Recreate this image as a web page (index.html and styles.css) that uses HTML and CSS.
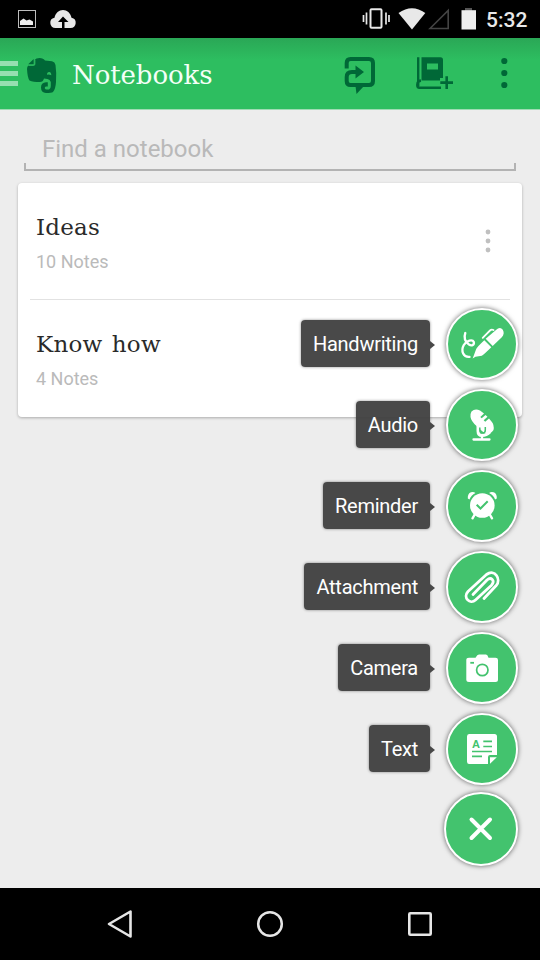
FILE: index.html
```html
<!DOCTYPE html>
<html lang="en">
<head>
<meta charset="utf-8">
<title>Notebooks</title>
<link rel="stylesheet" href="styles.css">
</head>
<body>
<div class="screen">
  <div class="statusbar">
    <svg class="status-left" width="80" height="38" viewBox="0 0 80 38">
      <rect x="18.500" y="10.500" width="17" height="17" fill="none" stroke="#bdbdbd"/>
      <path d="M20 25v-4l3.500-2.500 3 2 3-1 3.500 2v3.500z" fill="#eee"/>
      <path d="M55.500 28a5.200 5.200 0 0 1-1-10.300C55.500 13 59 10 63 10s7.500 3 8.500 7.700A5.200 5.200 0 0 1 70.500 28h-6v-6h4L63 16.500l-5 5.500h4v6z" fill="#e8e8e8"/>
    </svg>
    <svg class="status-right" width="120" height="38" viewBox="360 0 120 38">
      <rect x="370.500" y="9.200" width="11" height="18.600" rx="1" fill="none" stroke="#e8e8e8" stroke-width="2"/>
      <path d="M363.500 15v7M366.500 12.500v12M386 12.500v12M389 15v7" stroke="#e8e8e8" stroke-width="1.700"/>
      <path d="M398.500 13Q412 3.500 425.300 13L412 29.500z" fill="#e8e8e8"/>
      <path d="M430 28.500L448.200 10.500v18z" fill="none" stroke="#444" stroke-width="1.600"/>
      <path d="M465 8h7v3h-7z" fill="#555"/>
      <path d="M461.500 10.200h14.500v19.300h-14.500z" fill="#eee"/>
    </svg>
    <span class="clock">5:32</span>
  </div>

  <header class="appbar">
    <div class="drawer"><i></i><i></i><i></i></div>
    <svg class="logo" width="31" height="37" viewBox="26 57 31 37">
      <path d="M34.800 59.500Q36 58 39.500 58Q43.500 58 45 60.500L52 61.300Q55 62 55.500 65Q56.700 73 56 82Q55.500 89.500 53 92Q51.500 93 46 93Q41 92.500 41 87.500Q41 82.500 46 82.300L47.800 82.300V86.500H45.800Q44.600 87 44.800 88.300Q45.200 89.500 46.500 89.500H49Q50.800 89 50.800 86V82Q50 79.500 47.500 79L44 78.500Q43 82 40 82Q33 82 29.500 80.500Q27.500 78 27 69Q27 66.500 28.300 65.500H33.500Q34.800 65.500 34.800 64z" fill="#006837"/>
      <path d="M28.200 64.300L33.700 59V64.300z" fill="#006837"/>
      <path d="M34.900 59.500V64Q34.900 65.400 33.500 65.400H28.500" fill="none" stroke="#2dbe60" stroke-width="0.900"/>
      <path d="M47 74.700q0-3 2.300-2.800 2 .3 2 3.400-2-1-4.300-.6z" fill="#2dbe60"/>
    </svg>
    <h1 class="title">Notebooks</h1>
    <svg class="act-share" width="32" height="40" viewBox="344 56 32 40">
      <path d="M346.700 68.500V63Q346.700 59 350.500 59H369Q373 59 373 63V81Q373 85 369 85H350.500Q346.700 85 346.700 81V77Q346.700 72 352 72H357" fill="none" stroke="#006837" stroke-width="4"/>
      <path d="M355.500 65.500L364 72L355.500 78.500zM355.500 86H364L356.500 94z" fill="#006837"/>
    </svg>
    <svg class="act-new" width="38" height="36" viewBox="416 56 38 36">
      <path d="M421.500 57.300H440.500Q443 57.300 443 60V78H440V80.500H421.500zM427 63.500V69.500H438V63.500z" fill="#006837" fill-rule="evenodd"/>
      <path d="M418.200 57.300V86M441 87.800H419.500Q417 87.500 417.300 84.500Q417.500 81 421 80.500" fill="none" stroke="#006837" stroke-width="2.400"/>
      <path d="M446.700 76.200V89M440.300 82.600H453" stroke="#006837" stroke-width="2.600"/>
    </svg>
    <svg class="act-more" width="8" height="32" viewBox="0 0 8 32">
      <g fill="#006837"><circle cx="4.300" cy="4" r="3.100"/><circle cx="4.300" cy="16" r="3.100"/><circle cx="4.300" cy="28" r="3.100"/></g>
    </svg>
  </header>

  <main class="content">
    <div class="search"><span>Find a notebook</span></div>
    <section class="card">
      <article class="row">
        <div><h2>Ideas</h2><p>10 Notes</p></div>
        <svg class="row-more" width="6" height="24" viewBox="0 0 6 24">
          <g fill="#c0c0c0"><circle cx="3" cy="3" r="2.400"/><circle cx="3" cy="12" r="2.400"/><circle cx="3" cy="21" r="2.400"/></g>
        </svg>
      </article>
      <article class="row">
        <div><h2>Know how</h2><p>4 Notes</p></div>
      </article>
    </section>
  </main>

  <div class="fab-menu">
    <div class="fab-item">
      <span class="label">Handwriting</span>
      <div class="fab"><svg width="68" height="68" viewBox="448 310 68 68">
        <path d="M465.300 333C463.500 338 465.500 342 469 344.500C472 346.500 474.500 344.500 473.800 342C472.500 339 466.500 340.500 463.800 345C460.500 351 463.500 357.500 469.500 356.800" fill="none" stroke="#fff" stroke-width="2.300" stroke-linecap="round"/>
        <path d="M472.600 358.500L473.800 355.500L476.200 349Q477 347 484.300 340.200L491.300 347.300Q484 354.500 481.800 355.800L475.500 356.800z" fill="#fff"/>
        <path d="M485.700 338.800L496 330Q500 326.300 502.800 329.700Q505 333.500 501.800 337.200L492.700 345.900z" fill="#fff"/>
        <path d="M482.700 337.800L490 330.500Q491.500 329 493.500 330" fill="none" stroke="#fff" stroke-width="1.800" stroke-linecap="round"/>
      </svg></div>
    </div>
    <div class="fab-item">
      <span class="label">Audio</span>
      <div class="fab"><svg width="68" height="68" viewBox="448 391 68 68">
        <path d="M471.500 411.500Q475 408 480 410.500L484 413.500L480.300 416.900L481.700 418.200L485.500 415L487.500 416.700L483.700 420.300L485.200 421.700L489 418.500L491.500 421.500Q494.500 425 493.500 430Q491 434 486.500 433.500Q484 433.500 476.500 426Q471 421 470.500 417Q470 414 471.500 411.500z" fill="#fff"/>
        <path d="M478 426V431Q478 435.500 482 435.500Q486.500 435.500 490 432" fill="none" stroke="#fff" stroke-width="3"/>
        <path d="M479.800 427.500V430Q480 433 482.800 433Q485.300 433 485.300 430V427" fill="none" stroke="#43c36e" stroke-width="1.500"/>
        <path d="M482 435V439M473.500 439.500H489.500" stroke="#fff" stroke-width="2.300" stroke-linecap="round"/>
      </svg></div>
    </div>
    <div class="fab-item">
      <span class="label">Reminder</span>
      <div class="fab"><svg width="68" height="68" viewBox="448 472 68 68">
        <circle cx="482.300" cy="505.500" r="12.300" fill="#fff"/>
        <path d="M467.800 498.500Q467.500 493.500 471 492.300Q473.500 491.500 475.500 493Q471 495 469.500 499.500zM496.800 498.500Q497.100 493.500 493.600 492.300Q491.100 491.500 489.100 493Q493.600 495 495.100 499.500z" fill="#fff"/>
        <path d="M475 514L472.500 518.300M489.500 514L492 518.300" stroke="#fff" stroke-width="2.400" stroke-linecap="round"/>
        <path d="M476.700 504.700L480.500 508.500L487.700 501.300" fill="none" stroke="#43c36e" stroke-width="2"/>
      </svg></div>
    </div>
    <div class="fab-item">
      <span class="label">Attachment</span>
      <div class="fab"><svg width="68" height="68" viewBox="448 553 68 68">
        <path d="M484 598.500L496.200 585.500C501.500 579.500 495 568.500 486.500 574.500L468 591.500C462.500 597.500 470 605 475.500 600L491.500 585.200C495.500 580.500 491 576.500 487 580L473 594.500" fill="none" stroke="#fff" stroke-width="2.800" stroke-linejoin="round" stroke-linecap="round"/>
      </svg></div>
    </div>
    <div class="fab-item">
      <span class="label">Camera</span>
      <div class="fab"><svg width="68" height="68" viewBox="448 634 68 68">
        <path d="M469 657.700H475.500Q477.300 654.500 479 654.500H486Q487.500 654.500 488.500 657.700H495.500Q498 657.700 498 660V679.500Q498 682 495.500 682H469Q466.300 682 466.300 679.500V660Q466.300 657.700 469 657.700z" fill="#fff"/>
        <circle cx="482.300" cy="670" r="5.700" fill="none" stroke="#43c36e" stroke-width="1.700"/>
        <path d="M470.300 662.800H474" stroke="#43c36e" stroke-width="1.800"/>
      </svg></div>
    </div>
    <div class="fab-item">
      <span class="label">Text</span>
      <div class="fab"><svg width="68" height="68" viewBox="448 715 68 68">
        <path d="M469 734H494.500Q497 734 497 736.500V755H490Q488 755 488 757V764H469Q467 764 467 761.500V736.500Q467 734 469 734zM490 757.200H496.800L490 763.800z" fill="#fff"/>
        <text class="glyph" x="472" y="748">A</text>
        <path d="M483.300 741.300H492M483.300 746.500H492M472 751.500H492M472 756.300H482" stroke="#43c36e" stroke-width="1.700"/>
      </svg></div>
    </div>
    <div class="fab close"><svg width="70" height="70" viewBox="446 794.500 70 70">
      <path d="M471.500 820L490 838.500M490 820L471.500 838.500" stroke="#fff" stroke-width="4" stroke-linecap="round"/>
    </svg></div>
  </div>

  <nav class="navbar">
    <svg width="30" height="32" viewBox="105 908 30 32"><path d="M130.500 911.500V936.500L109 924z" fill="none" stroke="#e6e6e6" stroke-width="2.600" stroke-linejoin="round"/></svg>
    <svg width="30" height="32" viewBox="255 908 30 32"><circle cx="270" cy="924" r="11.800" fill="none" stroke="#e6e6e6" stroke-width="2.500"/></svg>
    <svg width="30" height="32" viewBox="405 908 30 32"><rect x="409.300" y="913.300" width="21.400" height="21.400" rx="1" fill="none" stroke="#e6e6e6" stroke-width="2.600"/></svg>
  </nav>
</div>
</body>
</html>
```
FILE: styles.css
```css
* { box-sizing: border-box; }
body { margin: 0; font-family: Roboto, sans-serif; }
svg { display: block; flex: none; }
h1, h2, p { margin: 0; font-weight: 400; }

.screen {
  position: relative;
  display: flex;
  flex-direction: column;
  width: 540px;
  height: 960px;
  overflow: hidden;
  background: #ededed;
}

.statusbar {
  display: flex;
  height: 38px;
  background: #000;
}
.status-right { margin-left: auto; }
.clock {
  width: 60px;
  padding-left: 6px;
  color: #e8e8e8;
  font-size: 21px;
  font-weight: 500;
  line-height: 40px;
}

.appbar {
  display: flex;
  align-items: flex-start;
  height: 72px;
  border-bottom: 1px solid #9fdcb4;
  background: linear-gradient(#2aa756, #2dbe60 22px);
}
.drawer {
  display: flex;
  flex-direction: column;
  gap: 5px;
  width: 18px;
  margin-top: 23px;
}
.drawer i { height: 5px; background: #96dfb0; }
.logo { margin: 19px 0 0 8px; }
.title {
  margin-left: 15px;
  color: #f4fff7;
  font-family: "DejaVu Serif", serif;
  font-size: 26px;
  letter-spacing: -0.1px;
  line-height: 74px;
}
.act-share { margin: 18px 0 0 auto; }
.act-new { margin: 18px 0 0 40px; }
.act-more { margin: 19px 32px 0 46px; }

.content { flex: 1; padding: 20px 18px 0; }
.search {
  position: relative;
  height: 41px;
  margin: 0 6px;
  padding-left: 18px;
  border-bottom: 2px solid #b3b3b3;
  color: #b9b9b9;
  font-size: 24px;
  line-height: 38px;
}
.search::before,
.search::after {
  content: "";
  position: absolute;
  bottom: 0;
  width: 2px;
  height: 6px;
  background: #b3b3b3;
}
.search::before { left: 0; }
.search::after { right: 0; }

.card {
  height: 234px;
  margin-top: 12px;
  padding: 0 12px;
  border-radius: 4px;
  background: #fff;
  box-shadow: 0 1px 3px rgba(0, 0, 0, .28);
}
.row {
  display: flex;
  justify-content: space-between;
  height: 117px;
  padding: 27px 19px 0 6px;
}
.row + .row { border-top: 1px solid #e2e2e2; margin-top: -1px; height: 118px; }
.row h2 {
  color: #2a2a2a;
  font-family: "DejaVu Serif", serif;
  font-size: 23px;
  letter-spacing: 0.2px;
  word-spacing: 2px;
  line-height: 34px;
}
.row p {
  margin-top: 6px;
  color: #bababa;
  font-size: 18px;
  line-height: 24px;
}
.row-more { margin-top: 19px; }

.fab-menu {
  position: absolute;
  top: 303.500px;
  right: 22px;
  display: flex;
  flex-direction: column;
  align-items: flex-end;
}
.fab-item {
  display: flex;
  align-items: center;
  height: 81px;
}
.label {
  position: relative;
  height: 47px;
  margin: 0 16px 1px 0;
  padding: 0 12px;
  border-radius: 4px;
  background: rgba(62, 62, 62, .94);
  box-shadow: 0 0 3px rgba(0, 0, 0, .45);
  color: #fff;
  font-size: 20px;
  letter-spacing: -0.25px;
  line-height: 48px;
}
.label::after {
  content: "";
  position: absolute;
  left: 100%;
  top: 21px;
  border: solid transparent;
  border-width: 4px 0 4px 5px;
  border-left-color: #484848;
}
.fab {
  width: 72px;
  height: 72px;
  border: 2px solid #fff;
  border-radius: 50%;
  background: #43c36e;
  box-shadow: 0 0 5px rgba(0, 0, 0, .6);
}
.close { width: 74px; height: 74px; margin-top: 2px; }
.glyph { fill: #43c36e; font: bold 11px "Liberation Sans", sans-serif; }

.navbar {
  display: flex;
  justify-content: center;
  align-items: center;
  gap: 120px;
  height: 72px;
  background: #000;
}
```
